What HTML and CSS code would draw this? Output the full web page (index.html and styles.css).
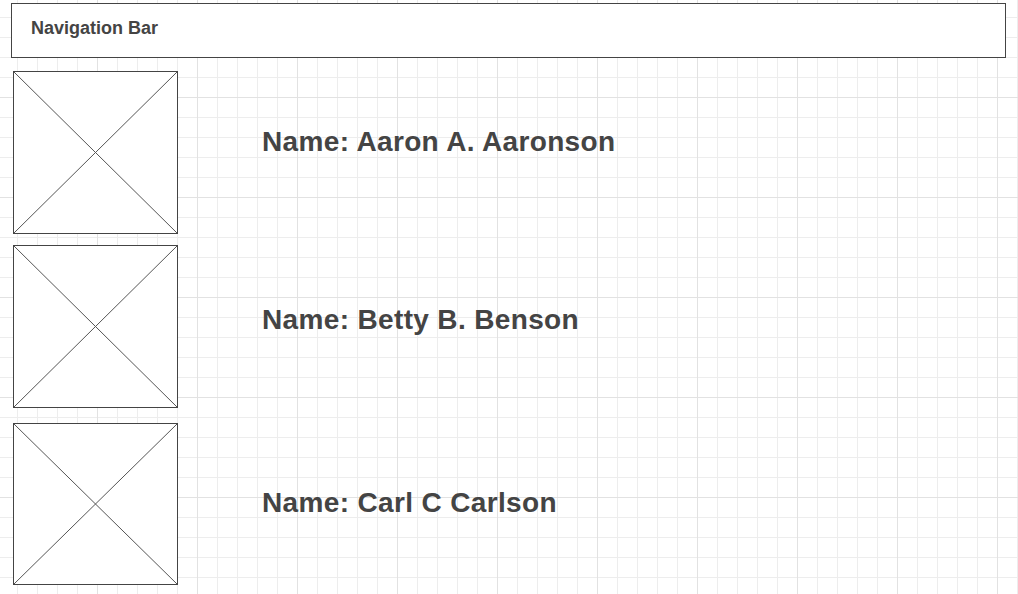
FILE: index.html
```html
<!DOCTYPE html>
<html lang="en">
<head>
<meta charset="utf-8">
<title>Wireframe</title>
<link rel="stylesheet" href="styles.css">
</head>
<body>
<header class="navbar"><span class="navbar__label">Navigation Bar</span></header>
<main class="list">
  <section class="row row--first">
    <div class="placeholder">
      <svg class="placeholder__x" viewBox="0 0 163 161" preserveAspectRatio="none"><line x1="0" y1="0" x2="163" y2="161"/><line x1="163" y1="0" x2="0" y2="161"/></svg>
    </div>
    <h2 class="row__name row__name--a">Name: Aaron A. Aaronson</h2>
  </section>
  <section class="row row--second">
    <div class="placeholder">
      <svg class="placeholder__x" viewBox="0 0 163 161" preserveAspectRatio="none"><line x1="0" y1="0" x2="163" y2="161"/><line x1="163" y1="0" x2="0" y2="161"/></svg>
    </div>
    <h2 class="row__name row__name--b">Name: Betty B. Benson</h2>
  </section>
  <section class="row row--third">
    <div class="placeholder placeholder--short">
      <svg class="placeholder__x" viewBox="0 0 163 160" preserveAspectRatio="none"><line x1="0" y1="0" x2="163" y2="160"/><line x1="163" y1="0" x2="0" y2="160"/></svg>
    </div>
    <h2 class="row__name row__name--c">Name: Carl C Carlson</h2>
  </section>
</main>
</body>
</html>
```

FILE: styles.css
```css
html {
  background-color: #ffffff;
  background-image:
    linear-gradient(to right, #e2e2e2 1px, transparent 1px),
    linear-gradient(to bottom, #e2e2e2 1px, transparent 1px),
    linear-gradient(to right, #ededed 1px, transparent 1px),
    linear-gradient(to bottom, #ededed 1px, transparent 1px);
  background-size: 100px 100px, 100px 100px, 20px 20px, 20px 20px;
  background-position: 97px 97px, 97px 97px, 17px 17px, 17px 17px;
  min-height: 100%;
}

body {
  margin: 0;
  font-family: "Liberation Sans", Arial, Helvetica, sans-serif;
  color: #444444;
}

.navbar {
  box-sizing: border-box;
  margin: 3px 0 0 11px;
  width: 995px;
  height: 55px;
  border: 1px solid #444444;
  background: #ffffff;
  display: flex;
  align-items: center;
  padding-left: 19px;
}

.navbar__label {
  font-size: 18px;
  font-weight: bold;
  position: relative;
  top: -2px;
}

.list {
  display: flex;
  flex-direction: column;
  padding: 13px 0 0 13px;
}

.row {
  display: flex;
  align-items: flex-start;
}

.row--second { margin-top: 11px; }
.row--third { margin-top: 15px; }

.placeholder {
  box-sizing: border-box;
  width: 165px;
  height: 163px;
  border: 1px solid #444444;
  background: #ffffff;
  flex: none;
}

.placeholder--short { height: 162px; }

.placeholder__x {
  display: block;
  width: 100%;
  height: 100%;
}

.placeholder__x line {
  stroke: #555555;
  stroke-width: 1;
}

.row__name {
  margin: 0 0 0 84px;
  font-size: 28px;
  line-height: 32px;
  font-weight: bold;
  letter-spacing: 0.35px;
}

.row__name--a { padding-top: 55px; }
.row__name--b { padding-top: 59px; }
.row__name--c { padding-top: 64px; }
```
